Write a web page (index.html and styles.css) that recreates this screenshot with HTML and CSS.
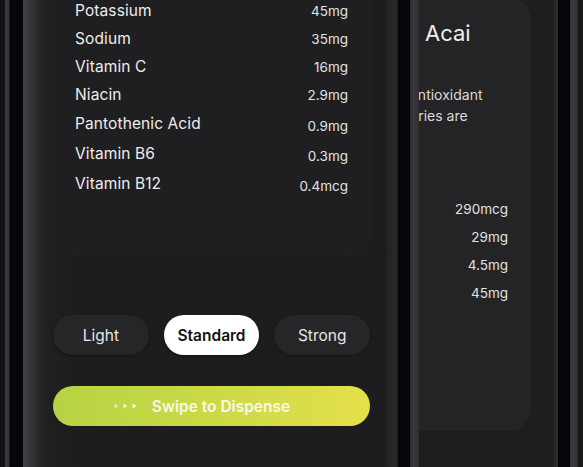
FILE: index.html
```html
<!DOCTYPE html>
<html lang="en">
<head>
<meta charset="utf-8">
<title>Dispense</title>
<link rel="stylesheet" href="styles.css">
</head>
<body>
<div class="stage">
  <div class="phone phone-prev"></div>

  <div class="phone phone-main">
    <div class="bezel bezel-left"></div>
    <div class="screen">
      <div class="card nutrients">
        <div class="row"><span class="name">Potassium</span><span class="amt">45mg</span></div>
        <div class="row"><span class="name">Sodium</span><span class="amt">35mg</span></div>
        <div class="row"><span class="name">Vitamin C</span><span class="amt">16mg</span></div>
        <div class="row"><span class="name">Niacin</span><span class="amt">2.9mg</span></div>
        <div class="row tall"><span class="name">Pantothenic Acid</span><span class="amt">0.9mg</span></div>
        <div class="row tall"><span class="name">Vitamin B6</span><span class="amt">0.3mg</span></div>
        <div class="row tall"><span class="name">Vitamin B12</span><span class="amt">0.4mcg</span></div>
      </div>

      <div class="strengths">
        <button class="pill">Light</button>
        <button class="pill active">Standard</button>
        <button class="pill">Strong</button>
      </div>

      <div class="swipe">
        <svg class="chevrons" width="24" height="8" viewBox="0 0 24 8" aria-hidden="true">
          <path d="M0.5 1.2 L4.5 4 L0.5 6.8 Z" fill="#ffffff" fill-opacity="0.55"/>
          <path d="M9.5 1.2 L13.5 4 L9.5 6.8 Z" fill="#ffffff" fill-opacity="0.7"/>
          <path d="M18.5 1.2 L22.5 4 L18.5 6.8 Z" fill="#ffffff" fill-opacity="0.85"/>
        </svg>
        <span class="swipe-label">Swipe to Dispense</span>
      </div>
    </div>
    <div class="bezel bezel-right"></div>
  </div>

  <div class="phone phone-next">
    <div class="bezel bezel-next-l"></div>
    <div class="screen screen-next">
      <div class="card acai">
        <h2 class="acai-title">Acai</h2>
        <div class="desc">
          <div class="desc-line l1">antioxidant</div>
          <div class="desc-line l2">berries are</div>
        </div>
        <div class="vals">
          <div class="val">290mcg</div>
          <div class="val">29mg</div>
          <div class="val">4.5mg</div>
          <div class="val">45mg</div>
        </div>
      </div>
    </div>
    <div class="bezel bezel-next-r"></div>
  </div>

  <div class="phone phone-far"></div>
</div>
</body>
</html>
```

FILE: styles.css
```css
* { box-sizing: border-box; }

html, body {
  margin: 0;
  padding: 0;
  background: #060608;
}

body {
  font-family: Inter, "Noto Sans", "Liberation Sans", sans-serif;
  color: #ececec;
}

.stage {
  display: flex;
  width: 583px;
  height: 467px;
  overflow: hidden;
  background: #060608;
}

.phone {
  display: flex;
  height: 467px;
  flex-shrink: 0;
}

/* sliver of the previous phone */
.phone-prev {
  width: 10px;
  background: linear-gradient(90deg, #121214 0, #121214 5px, #3a3a3e 5px, #34343a 9px, #18181a 9px);
}

/* active phone */
.phone-main {
  margin-left: 13px;
  width: 375px;
}

.bezel { height: 100%; flex-shrink: 0; }

.bezel-left {
  width: 14px;
  background: linear-gradient(90deg, #434347 0, #38383c 6px, #2d2d30 14px);
}

.bezel-right {
  width: 12px;
  background: linear-gradient(90deg, #212123 0, #252527 6px, #2c2c2e 9px, #1c1c1e 12px);
}

.screen {
  flex: 1;
  height: 100%;
  overflow: hidden;
  background: linear-gradient(90deg, #27272a 0, #1f1f21 14px, #1d1d1f 40px);
  padding: 0 16px;
  display: flex;
  flex-direction: column;
}

.card {
  border-radius: 20px;
}

.nutrients {
  margin-top: -25px;
  padding: 20px 21px 57px;
  background: #1f1f21;
  border: 1px solid rgba(255, 255, 255, 0.012);
}

.row {
  display: flex;
  justify-content: space-between;
  align-items: center;
  height: 28px;
}

.row.tall { height: 30px; }

.name {
  font-size: 15.5px;
  color: #ededed;
  letter-spacing: 0.1px;
}

.amt {
  font-size: 13.5px;
  color: #e2e2e2;
  margin-top: 2px;
}

.row.tall .amt { margin-top: 6px; }

.strengths {
  display: flex;
  gap: 15px;
  margin-top: 59px;
}

.pill {
  flex: 1;
  height: 40px;
  border: none;
  border-radius: 20px;
  background: #262628;
  color: #e6e6e6;
  font-family: inherit;
  font-size: 15.5px;
  padding: 0;
  box-shadow: 0 1px 3px rgba(0, 0, 0, 0.35);
}

.pill.active {
  background: #ffffff;
  color: #121212;
  font-weight: 600;
}

.swipe {
  margin-top: 31px;
  height: 40px;
  border-radius: 20px;
  background: linear-gradient(90deg, #b6d343 0%, #cbd946 50%, #e4e04a 100%);
  display: flex;
  align-items: center;
  justify-content: center;
  gap: 14px;
  padding-right: 19px;
}

.chevrons { display: block; }

.swipe-label {
  font-size: 15.5px;
  font-weight: 600;
  color: #f7f8ea;
}

/* next phone (partially visible) */
.phone-next {
  margin-left: 12px;
  width: 148px;
}

.bezel-next-l {
  width: 9px;
  background: linear-gradient(90deg, #2a2a2e 0, #3a3a3e 4px, #2e2e31 9px);
}

.bezel-next-r {
  width: 5px;
  background: linear-gradient(90deg, #252527 0, #2c2c2e 5px);
}

.screen-next {
  padding: 0 23px 0 0;
  background: #1e1e20;
  flex-direction: row;
  justify-content: flex-end;
}

.acai {
  flex-shrink: 0;
  width: 160px;
  height: 432px;
  margin-top: -2px;
  background: #242426;
  padding: 0 21px 0 54px;
  border: 1px solid rgba(255, 255, 255, 0.02);
  display: flex;
  flex-direction: column;
}

.acai-title {
  margin: 20px 0 0;
  font-size: 22px;
  font-weight: 400;
  line-height: 28px;
  color: #efefef;
}

.desc {
  margin-top: 37px;
  font-size: 14px;
  line-height: 21px;
  color: #dadada;
  white-space: nowrap;
}

.desc-line.l1 { text-indent: -15px; }
.desc-line.l2 { text-indent: -29px; }

.vals {
  margin-top: 69px;
  text-align: right;
  font-size: 13.5px;
  color: #e2e2e2;
}

.val { height: 28px; line-height: 28px; }

/* far-right sliver */
.phone-far {
  margin-left: 12px;
  width: 13px;
  background: linear-gradient(90deg, #36363a 0, #3a3a3e 4px, #2c2c30 8px, #19191b 8px);
}
```
